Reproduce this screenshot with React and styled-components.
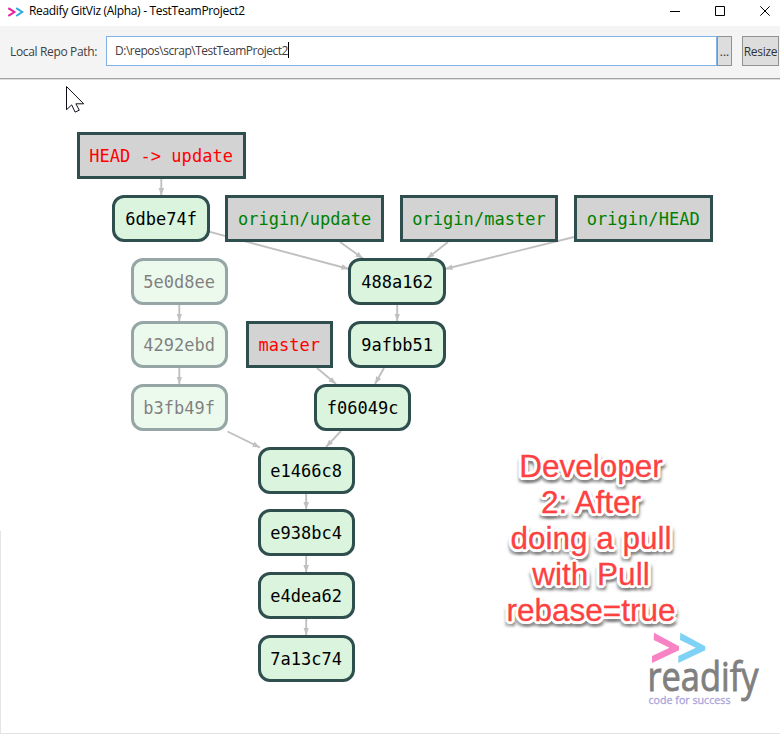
import React from "react";
import styled, { createGlobalStyle } from "styled-components";

const GlobalStyle = createGlobalStyle`
  * { box-sizing: border-box; }
  body { margin: 0; background: #fff; overflow: hidden; }
`;

const Window = styled.div`
  width: 780px;
  height: 734px;
  display: flex;
  flex-direction: column;
  background: #fff;
  font-family: "Open Sans", "Noto Sans", sans-serif;
`;

const TitleBar = styled.header`
  height: 26px;
  flex: none;
  display: flex;
  align-items: center;
  padding: 0 8px;
`;

const AppIcon = styled.svg`
  width: 16px;
  height: 10px;
  margin-top: -3px;
`;

const Title = styled.h1`
  flex: 1;
  margin: -4px 0 0 5px;
  font-size: 12px;
  font-weight: 400;
  line-height: 18px;
  letter-spacing: -0.32px;
  white-space: nowrap;
  color: #000;
`;

const Controls = styled.div`
  display: flex;
  gap: 35px;
  margin: -4px 2px 0 0;
`;

const ControlIcon = styled.svg`
  width: 10px;
  height: 10px;
  display: block;
  fill: none;
  stroke: #000;
  stroke-width: 1;
`;

const Toolbar = styled.div`
  height: 54px;
  flex: none;
  display: flex;
  align-items: flex-start;
  padding: 10px 1px 0 10px;
  background: #f4f4f4;
  border-bottom: 1px solid #dedede;
  box-shadow: inset 0 -1px #a3a3a3;
`;

const Label = styled.label`
  width: 96px;
  font-size: 12px;
  line-height: 31px;
  letter-spacing: -0.35px;
  white-space: nowrap;
  color: #404040;
`;

const PathField = styled.div`
  width: 611px;
  height: 30px;
  display: flex;
  align-items: center;
  padding: 0 0 2px 8px;
  background: #fff;
  border: 1px solid #7eb4ea;
  font-size: 12px;
  letter-spacing: -0.48px;
  white-space: nowrap;
  color: #404040;
`;

const Caret = styled.span`
  width: 1px;
  height: 16px;
  background: #000;
`;

const ToolButton = styled.button`
  width: ${(p) => p.$width}px;
  height: 30px;
  margin: 0 0 0 ${(p) => p.$gap || 0}px;
  padding: 0;
  background: #dddddd;
  border: 1px solid #929292;
  font-family: inherit;
  font-size: 12px;
  letter-spacing: ${(p) => p.$tracking || 0}px;
  color: #333;
`;

const Canvas = styled.main`
  position: relative;
  flex: 1;
  overflow: hidden;
  border-bottom: 1px solid #e2e2e2;
`;

const Edges = styled.svg`
  position: absolute;
  left: 0;
  top: -80px;
  width: 780px;
  height: 734px;
`;

const Node = styled.div`
  position: absolute;
  left: ${(p) => p.$x}px;
  top: ${(p) => 52.4 + p.$row * 62.83}px;
  width: ${(p) => p.$w}px;
  height: 47px;
  border: 3px solid #2f4f4f;
  font: 17px/43px "DejaVu Sans Mono", monospace;
  letter-spacing: 0.03px;
  text-align: center;
  white-space: pre;
`;

const Commit = styled(Node)`
  border-radius: 12px;
  background: #daf4dd;
  color: #000;
  opacity: ${(p) => (p.$faded ? 0.5 : 1)};
`;

const Ref = styled(Node)`
  background: #d3d3d3;
  color: ${(p) => (p.$local ? "#ff0000" : "#008000")};
`;

const Note = styled.p`
  position: absolute;
  left: 490px;
  top: 368px;
  width: 202px;
  margin: 0;
  font: 31.5px/36px "Liberation Sans", sans-serif;
  text-align: center;
  color: #ff4040;
  -webkit-text-stroke: 0.3px #ff4040;
  text-shadow:
    3px 0 #fff, -3px 0 #fff, 0 3px #fff, 0 -3px #fff,
    2px 2px #fff, -2px 2px #fff, 2px -2px #fff, -2px -2px #fff,
    3px 1px #fff, -3px 1px #fff, 1px 3px #fff, -1px 3px #fff,
    3px 5px 3px #777, 0 5px 3px #888, -3px 5px 3px #999, 3px 3px 4px #888;
`;

const NoteLine = styled.span`
  display: block;
`;

const Logo = styled.svg`
  position: absolute;
  left: 640px;
  top: 545px;
  width: 130px;
  height: 90px;
  overflow: visible;
  font-family: "Open Sans", sans-serif;
`;

const Pointer = styled.svg`
  position: absolute;
  left: 66px;
  top: 5px;
  width: 20px;
  height: 30px;
`;

const FrameEdge = styled.div`
  position: absolute;
  left: 0;
  top: 451px;
  bottom: 0;
  width: 1px;
  background: #e4e4e4;
`;

const edges = [
  [161.3, 179, 161.3, 195.5],
  [209, 231.7, 349, 269],
  [340, 242, 363, 258.5],
  [448, 242, 427, 258.5],
  [574, 237, 445, 269],
  [397.2, 305, 397.2, 321],
  [384, 368, 375, 384],
  [317, 368, 336, 384],
  [341, 431, 326, 447],
  [227.5, 431.5, 260, 447.5],
  [179.3, 305, 179.3, 321],
  [179.3, 368, 179.3, 384],
  [306.2, 493, 306.2, 509.5],
  [306.2, 556, 306.2, 572.5],
  [306.2, 619, 306.2, 635],
];

const commits = [
  ["6dbe74f", 112.4, 1],
  ["488a162", 348.4, 2],
  ["9afbb51", 348.4, 3],
  ["f06049c", 314, 4],
  ["e1466c8", 257.5, 5],
  ["e938bc4", 257.5, 6],
  ["e4dea62", 257.5, 7],
  ["7a13c74", 257.5, 8],
  ["5e0d8ee", 130.5, 2, true],
  ["4292ebd", 130.5, 3, true],
  ["b3fb49f", 130.5, 4, true],
];

const refs = [
  ["HEAD -> update", 76.6, 169, 0, true],
  ["origin/update", 225.3, 158.7, 1],
  ["origin/master", 399.7, 158.7, 1],
  ["origin/HEAD", 574, 138.5, 1],
  ["master", 245.7, 87.3, 3, true],
];

const noteLines = ["Developer", "2: After", "doing a pull", "with Pull", "rebase=true"];

export default function App() {
  return (
    <Window>
      <GlobalStyle />
      <TitleBar>
        <AppIcon viewBox="0 0 16 10" fill="none" strokeWidth="2">
          <path d="M.4 1.2 6.4 5 .4 9" stroke="#ec1c9c" />
          <path d="M8.2 1.2 14.2 5 8.2 9" stroke="#2fa9e0" />
        </AppIcon>
        <Title>Readify GitViz (Alpha) - TestTeamProject2</Title>
        <Controls>
          <ControlIcon viewBox="0 0 10 10"><path d="M0 5.5h10" /></ControlIcon>
          <ControlIcon viewBox="0 0 10 10"><path d="M.5.5h9v9h-9z" /></ControlIcon>
          <ControlIcon viewBox="0 0 10 10"><path d="m.3.3 9.4 9.4M9.7.3.3 9.7" /></ControlIcon>
        </Controls>
      </TitleBar>
      <Toolbar>
        <Label>Local Repo Path:</Label>
        <PathField>D:\repos\scrap\TestTeamProject2<Caret /></PathField>
        <ToolButton $width={15}>...</ToolButton>
        <ToolButton $width={37} $gap={10} $tracking={-0.3}>Resize</ToolButton>
      </Toolbar>
      <Canvas>
        <FrameEdge />
        <Edges viewBox="0 0 780 734">
          <defs>
            <marker id="arrow" markerUnits="userSpaceOnUse" markerWidth="8" markerHeight="6" refX="7.5" refY="3" orient="auto">
              <path d="M0 .2 7.5 3 0 5.8z" fill="#c0c0c0" />
            </marker>
          </defs>
          {edges.map(([x1, y1, x2, y2]) => (
            <line key={`${x1}-${y1}`} x1={x1} y1={y1} x2={x2} y2={y2} stroke="#c0c0c0" strokeWidth="1.9" markerEnd="url(#arrow)" />
          ))}
        </Edges>
        {refs.map(([name, x, w, row, local]) => (
          <Ref key={name} $x={x} $w={w} $row={row} $local={local}>{name}</Ref>
        ))}
        {commits.map(([hash, x, row, faded]) => (
          <Commit key={hash} $x={x} $w={97.4} $row={row} $faded={faded}>{hash}</Commit>
        ))}
        <Logo viewBox="640 625 130 90">
          <path d="m654 632.8 25 13.4v4L652 663v-7l17.5-8.2L653.7 640z" fill="#f783c5" />
          <path d="m680.3 632.8 25 13.4v4L678.3 663v-7l17.5-8.2L680 640z" fill="#7fd2f5" />
          <text x="647.5" y="690.5" fontSize="41" fill="#808080" stroke="#808080" strokeWidth=".9" textLength="111" lengthAdjust="spacingAndGlyphs">readify</text>
          <text x="648.5" y="703.5" fontSize="11" fill="#aaa4dc" stroke="#aaa4dc" strokeWidth=".3" textLength="82" lengthAdjust="spacingAndGlyphs">code for success</text>
        </Logo>
        <Note>
          {noteLines.map((line) => <NoteLine key={line}>{line}</NoteLine>)}
        </Note>
        <Pointer viewBox="66 85 20 30">
          <path d="M66.5 86.5v23.2l5.2-4.8 3.4 7.2 4.2-1.9-3.4-6.4h7.8z" fill="#fff" stroke="#10101c" />
        </Pointer>
      </Canvas>
    </Window>
  );
}
